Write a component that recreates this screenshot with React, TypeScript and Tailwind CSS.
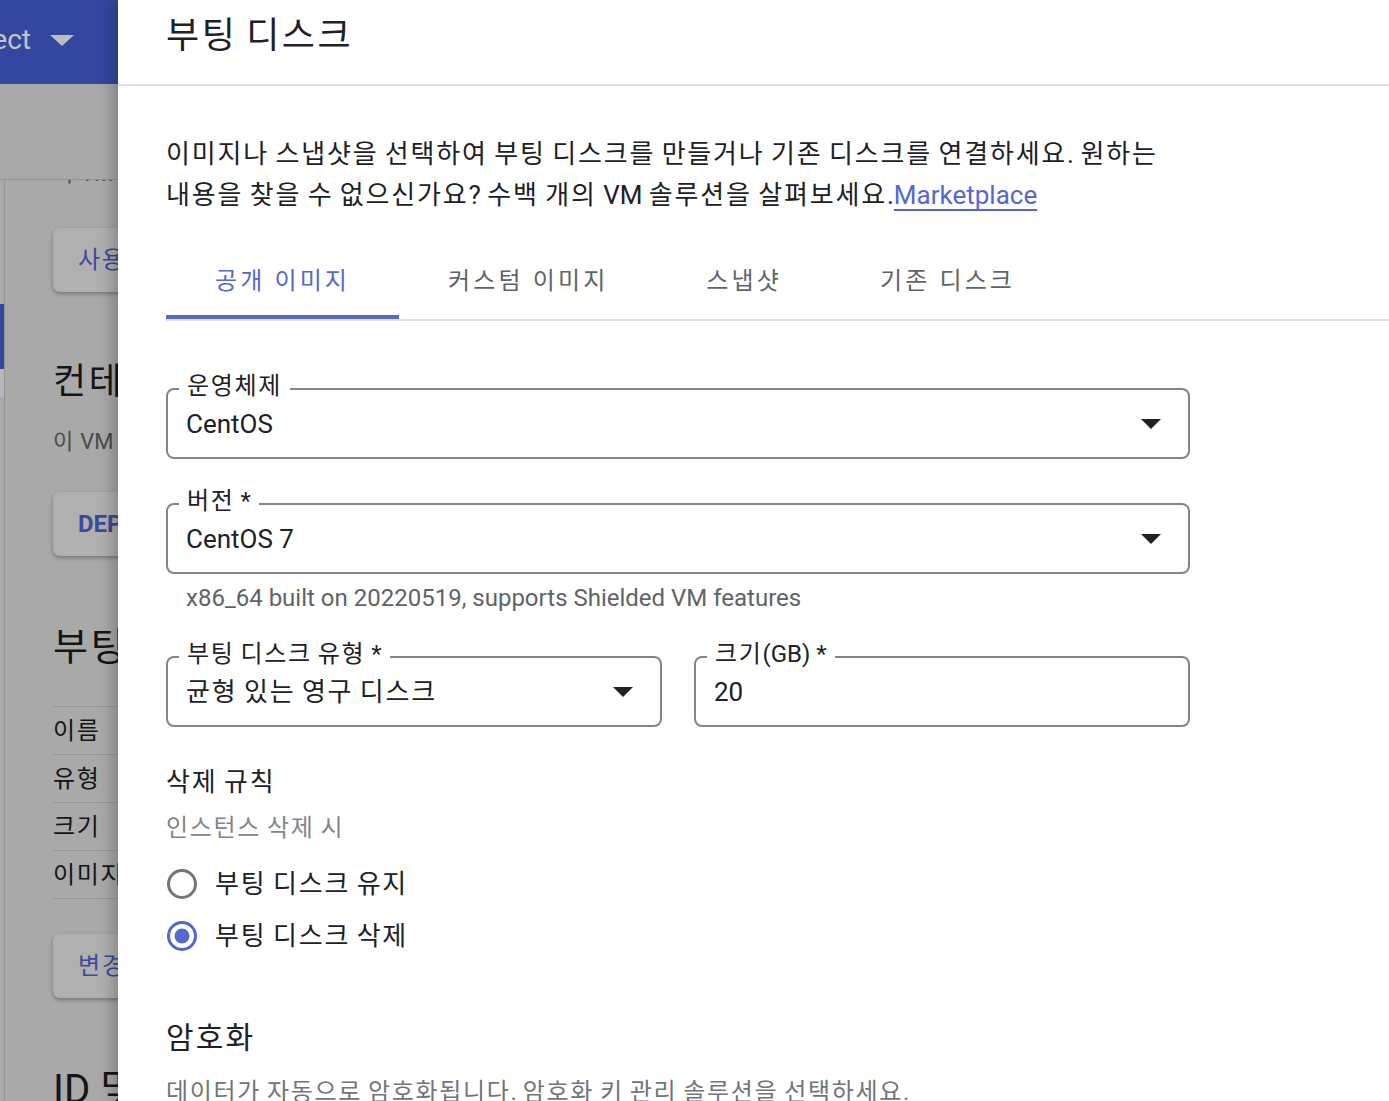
import React from 'react'

const font = { fontFamily: 'Roboto, "Noto Sans CJK KR", sans-serif' }

// Hangul in the reference is set full-width; widen Hangul runs only
function Ko({ children }: { children: string }) {
  const parts = children.split(/([\uAC00-\uD7A3]+)/)
  return (
    <>
      {parts.map((p, i) =>
        /[\uAC00-\uD7A3]/.test(p) ? (
          <span key={i} className="tracking-[0.07em]">
            {p}
          </span>
        ) : (
          p
        )
      )}
    </>
  )
}

function Caret({ color = '#202124' }: { color?: string }) {
  return (
    <svg width="20" height="10" viewBox="0 0 20 10" className="shrink-0">
      <path d="M0 0h20L10 10z" fill={color} />
    </svg>
  )
}

function OutlinedField({
  label,
  value,
  arrow,
  className = '',
}: {
  label: string
  value: string
  arrow?: boolean
  className?: string
}) {
  return (
    <div
      className={`relative h-[71px] rounded-[8px] border-2 border-[#80868b] flex items-center pl-[18px] pr-[27px] ${className}`}
    >
      <span className="absolute left-[11px] -top-[19px] bg-white px-[8px] text-[24px] leading-[30px] text-[#202124] whitespace-nowrap">
        <Ko>{label}</Ko>
      </span>
      <span className="flex-1 text-[26px] leading-[34px] text-[#202124] whitespace-nowrap">
        <Ko>{value}</Ko>
      </span>
      {arrow && <Caret />}
    </div>
  )
}

function Radio({ checked, label }: { checked?: boolean; label: string }) {
  return (
    <div className="flex items-center h-[52px] gap-[17px]">
      <svg width="32" height="32" viewBox="0 0 32 32" className="shrink-0">
        <circle
          cx="16"
          cy="16"
          r="13.5"
          fill="none"
          stroke={checked ? '#5468d0' : '#757575'}
          strokeWidth="3"
        />
        {checked && <circle cx="16" cy="16" r="7.5" fill="#5468d0" />}
      </svg>
      <span className="text-[26px] leading-[34px] text-[#202124]">
        <Ko>{label}</Ko>
      </span>
    </div>
  )
}

function BgButton({ children, bold }: { children: string; bold?: boolean }) {
  return (
    <div className="self-start w-[240px] h-[64px] rounded-[7px] bg-[#b0b0b0] shadow-[0_2px_4px_rgba(0,0,0,0.3)] flex items-center pl-[25px] shrink-0">
      <span className={`whitespace-nowrap text-[24px] text-[#3a4a9c] ${bold ? 'font-bold' : ''}`}>
        <Ko>{children}</Ko>
      </span>
    </div>
  )
}

export default function App() {
  const tabs = ['공개 이미지', '커스텀 이미지', '스냅샷', '기존 디스크']

  return (
    <div className="w-[1389px] h-[1101px] overflow-hidden flex" style={font}>
      {/* page behind the drawer (dimmed) */}
      <div className="w-[118px] shrink-0 flex flex-col bg-[#a9a9a9] overflow-hidden">
        <div className="h-[84px] shrink-0 bg-[#3447a0] flex items-center pb-[4px]">
          <div className="flex items-center ml-[-46px] gap-[19px]">
            <span className="text-[28px] text-[#c4c4c4] whitespace-nowrap">Select</span>
            <svg width="24" height="11" viewBox="0 0 24 11">
              <path d="M0 0h24L12 11z" fill="#bdbdbd" />
            </svg>
          </div>
        </div>
        <div className="h-[96px] shrink-0 border-b border-[#929292]" />
        <div className="flex-1 flex min-h-0">
          <div className="w-[5px] shrink-0 border-r border-[#959595] flex flex-col">
            <div className="mt-[124px] h-[93px] bg-[#b5b6be] flex">
              <div className="w-[4px] h-[65px] bg-[#3447a0]" />
            </div>
          </div>
          <div className="flex-1 flex flex-col pl-[48px] overflow-hidden">
            <div className="mt-[-21px] h-[30px] text-[22px] leading-[30px] text-[#4a4a4a] whitespace-nowrap shrink-0">
              <Ko>이 VM 인스턴스</Ko>
            </div>
            <div className="mt-[39px] shrink-0 flex">
              <BgButton>사용 설정</BgButton>
            </div>
            <div className="mt-[66px] h-[48px] text-[36px] leading-[48px] text-[#151515] whitespace-nowrap shrink-0">
              <Ko>컨테이너</Ko>
            </div>
            <div className="mt-[20px] h-[32px] text-[22px] leading-[32px] text-[#4a4a4a] whitespace-nowrap shrink-0">
              <Ko>이 VM 인스턴스에</Ko>
            </div>
            <div className="mt-[34px] shrink-0 flex">
              <BgButton bold>DEPLOY CONTAINER</BgButton>
            </div>
            <div className="mt-[65px] h-[52px] text-[38px] leading-[52px] text-[#151515] whitespace-nowrap shrink-0">
              <Ko>부팅 디스크</Ko>
            </div>
            <div className="mt-[33px] border-t border-[#959595] w-[300px] shrink-0">
              {['이름', '유형', '크기', '이미지'].map((r) => (
                <div
                  key={r}
                  className="h-[48px] border-b border-[#959595] flex items-center text-[24px] text-[#151515] whitespace-nowrap"
                >
                  <Ko>{r}</Ko>
                </div>
              ))}
            </div>
            <div className="mt-[35px] shrink-0 flex">
              <BgButton>변경</BgButton>
            </div>
            <div className="mt-[66px] h-[52px] text-[40px] leading-[52px] text-[#151515] whitespace-nowrap shrink-0">
              <Ko>ID 및 API 액세스</Ko>
            </div>
          </div>
        </div>
      </div>

      {/* drawer */}
      <div className="flex-1 bg-white relative z-10 shadow-[-6px_0_14px_rgba(0,0,0,0.22)] flex flex-col">
        <div className="h-[86px] shrink-0 border-b-2 border-[#e0e0e0] pl-[48px] pt-[14px]">
          <h1 className="text-[36px] leading-[44px] text-[#202124]">
            <Ko>부팅 디스크</Ko>
          </h1>
        </div>

        <div className="pl-[48px] flex flex-col">
          <p className="mt-[48px] w-[1024px] text-[26px] leading-[41px] text-[#202124] break-keep">
            <Ko>
              이미지나 스냅샷을 선택하여 부팅 디스크를 만들거나 기존 디스크를 연결하세요. 원하는 내용을 찾을 수 없으신가요? 수백 개의 VM 솔루션을 살펴보세요.
            </Ko>
            <a className="text-[#5468d0] underline underline-offset-[5px] decoration-2">Marketplace</a>
          </p>

          <div className="mt-[31px] flex border-b-2 border-[#e0e0e0]">
            {tabs.map((t, i) => (
              <div key={t} className="relative h-[72px] px-[49px] flex items-center pb-[4px]">
                <span
                  className={`text-[24px] tracking-[0.13em] whitespace-nowrap ${
                    i === 0 ? 'text-[#5468d0]' : 'text-[#5f6368]'
                  }`}
                >
                  {t}
                </span>
                {i === 0 && <div className="absolute left-0 right-0 bottom-0 h-[4px] bg-[#5468d0]" />}
              </div>
            ))}
          </div>

          <OutlinedField className="mt-[67px] w-[1024px]" label="운영체제" value="CentOS" arrow />
          <OutlinedField className="mt-[44px] w-[1024px]" label="버전 *" value="CentOS 7" arrow />
          <div className="mt-[9px] pl-[20px] text-[24px] leading-[30px] text-[#5f6368]">
            x86_64 built on 20220519, supports Shielded VM features
          </div>

          <div className="mt-[43px] w-[1024px] flex gap-[32px]">
            <OutlinedField className="w-[496px]" label="부팅 디스크 유형 *" value="균형 있는 영구 디스크" arrow />
            <OutlinedField className="w-[496px]" label="크기(GB) *" value="20" />
          </div>

          <div className="mt-[38px] text-[26px] leading-[34px] text-[#202124]">
            <Ko>삭제 규칙</Ko>
          </div>
          <div className="mt-[13px] text-[24px] leading-[32px] text-[#80868b]">
            <Ko>인스턴스 삭제 시</Ko>
          </div>
          <div className="mt-[14px] flex flex-col">
            <Radio label="부팅 디스크 유지" />
            <Radio checked label="부팅 디스크 삭제" />
          </div>

          <div className="mt-[56px] text-[30px] leading-[40px] text-[#202124]">
            <Ko>암호화</Ko>
          </div>
          <div className="mt-[18px] text-[24px] leading-[32px] text-[#70757a] whitespace-nowrap">
            <Ko>데이터가 자동으로 암호화됩니다. 암호화 키 관리 솔루션을 선택하세요.</Ko>
          </div>
        </div>
      </div>
    </div>
  )
}
